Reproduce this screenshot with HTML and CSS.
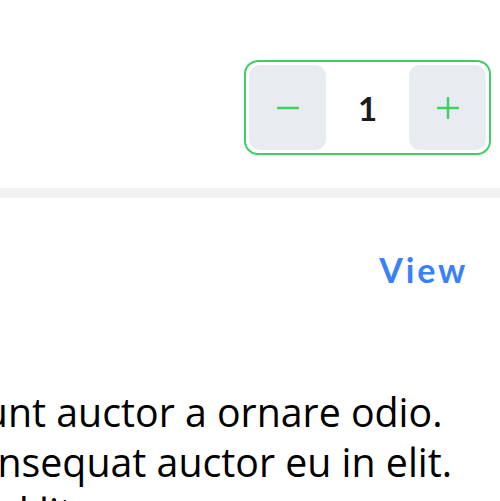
FILE: index.html
```html
<!DOCTYPE html>
<html>
<head>
<meta charset="utf-8">
<link rel="stylesheet" href="styles.css">
</head>
<body>
<div class="top">
  <div class="stepper">
    <div class="btn">
      <svg width="22" height="22" viewBox="0 0 22 22"><path d="M1 11H21" stroke="#3fcf63" stroke-width="2.5" stroke-linecap="round"/></svg>
    </div>
    <div class="count">1</div>
    <div class="btn">
      <svg width="22" height="22" viewBox="0 0 22 22"><path d="M1 11H21M11 1V21" stroke="#3fcf63" stroke-width="2.5" stroke-linecap="round"/></svg>
    </div>
  </div>
</div>
<div class="divider"></div>
<div class="view-row"><a class="view">View</a></div>
<div class="text">
  <div class="line l1">tincidunt auctor a ornare odio.</div>
  <div class="line l2">consequat auctor eu in elit.</div>
  <div class="line l3">ad litora</div>
</div>
</body>
</html>
```
FILE: styles.css
```css
html, body { margin: 0; padding: 0; background: #fff; }
body { width: 500px; overflow: hidden; font-family: "Open Sans", sans-serif; }
.top { display: flex; justify-content: flex-end; padding: 60px 9px 33px 0; }
.stepper { display: flex; border: 2px solid #3fcf63; border-radius: 14px; padding: 3px; }
.btn { width: 77px; height: 85px; background: #e8ebef; border-radius: 11px; display: flex; align-items: center; justify-content: center; }
.count { width: 83px; display: flex; align-items: center; justify-content: center; font-family: Lato, sans-serif; font-weight: 700; font-size: 33px; color: #1b1b1b; }
.divider { height: 10px; background: #f2f2f2; }
.view-row { display: flex; justify-content: flex-end; padding: 53px 32px 0 0; }
.view { font-family: Lato, sans-serif; font-weight: 700; font-size: 34px; line-height: 38px; letter-spacing: 2.8px; color: #3880ff; }
.text { padding-top: 98px; font-size: 39.3px; line-height: 50px; color: #000; overflow: hidden; }
.line { white-space: nowrap; }
.l1 { margin-left: -117px; }
.l2 { margin-left: -45px; }
.l3 { margin-left: -17px; }
```
